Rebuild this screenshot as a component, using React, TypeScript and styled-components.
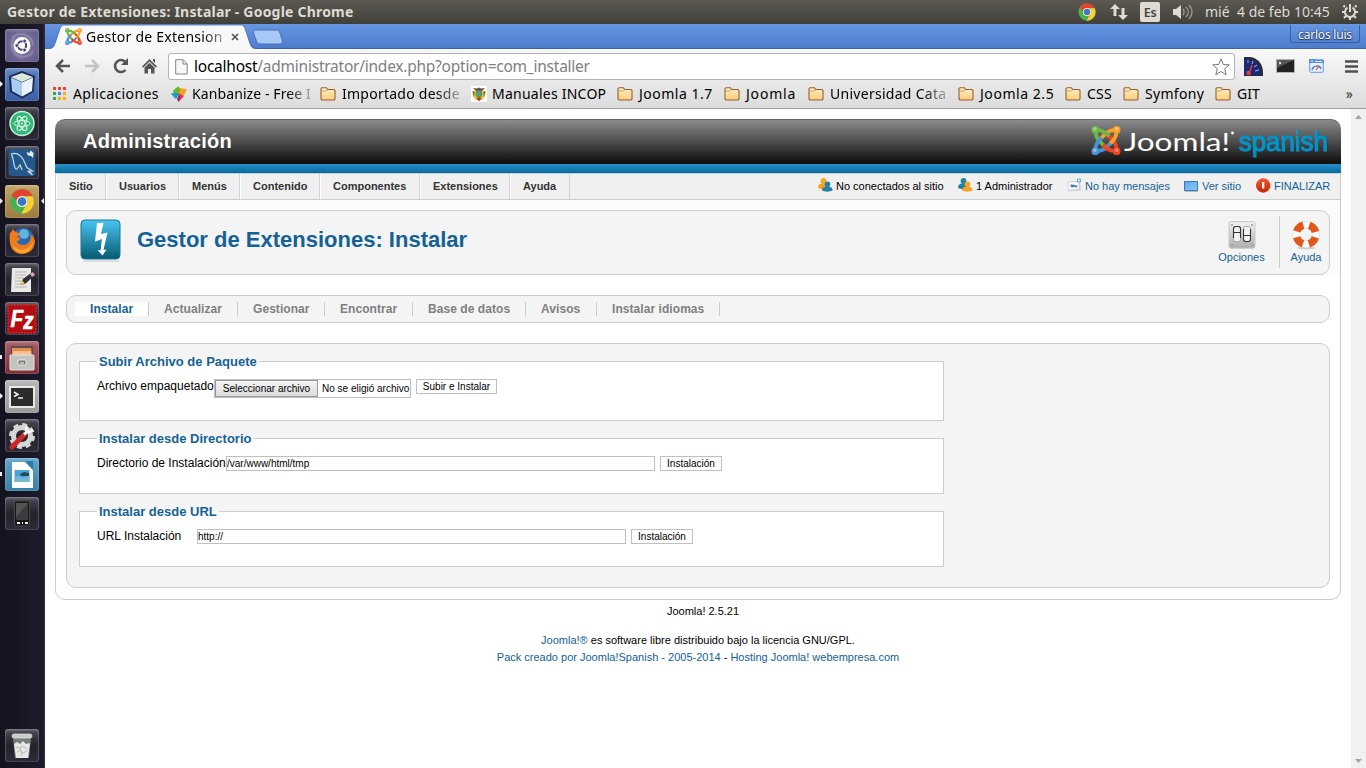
import React from 'react';
import styled, { createGlobalStyle } from 'styled-components';

const Global = createGlobalStyle`
  * { box-sizing: border-box; }
  html, body, #root { height: 100%; }
  body { margin: 0; overflow: hidden; background: #fff; color: #000; font-family: "Liberation Sans", Arial, sans-serif; font-size: 11px; }
  svg { display: block; flex: none; overflow: visible; }
`;

const Desktop = styled.div`
  width: 1366px; height: 768px; display: flex; flex-direction: column; overflow: hidden;
`;
const SystemBar = styled.header`
  height: 24px; flex: none; display: flex; align-items: center; justify-content: space-between;
  padding: 0 8px 0 7px; background: linear-gradient(#5b5952, #403f3a); color: #dfdbd2;
  font-family: "Noto Sans", sans-serif; font-size: 14px;
`;
const WindowTitle = styled.div`
  font-weight: 700; font-size: 14px; letter-spacing: 0.21px; line-height: 18px; padding-bottom: 1px; white-space: nowrap;
`;
const Tray = styled.div` display: flex; align-items: center; height: 24px; `;
const TrayItem = styled.div<{ $gap: number }>` margin-left: ${p => p.$gap}px; `;
const Lang = styled.div`
  width: 20px; height: 20px; border-radius: 2px; background: #dfdbd2; color: #45433e;
  font-size: 12.5px; letter-spacing: -0.3px; font-weight: 600; display: flex; align-items: center; justify-content: center;
`;
const Clock = styled.div` font-size: 14px; letter-spacing: 0.02px; line-height: 18px; padding-bottom: 1px; white-space: pre; width: 125px; `;
const Below = styled.div` flex: 1; display: flex; min-height: 0; `;
const Launcher = styled.nav`
  width: 45px; flex: none; padding: 5px 0 6px 5px; background: linear-gradient(90deg, #14121f, #1d1a2a 95%, #34313f);
  display: flex; flex-direction: column; gap: 6px;
`;
const Tile = styled.div<{ $bg: string; $last?: boolean }>`
  position: relative; width: 34px; height: 33px; flex: none; border-radius: 3px;
  background: ${p => p.$bg}; margin-top: ${p => (p.$last ? 'auto' : '0')};
  box-shadow: inset 0 0 0 1px rgba(255,255,255,.12), inset 0 2px 3px rgba(255,255,255,.2);
`;
const Mark = styled.i<{ $kind: 'arrow' | 'bar' | 'right' }>`
  position: absolute; top: ${p => (p.$kind === 'bar' ? 14 : 13)}px;
  ${p => (p.$kind === 'right' ? 'right: -5px' : 'left: -5px')};
  ${p => p.$kind === 'bar' ? 'width: 2px; height: 4px; background: #eee;'
    : p.$kind === 'arrow' ? 'border: 3px solid transparent; border-left-color: #eee; border-right: 0;'
      : 'border: 3px solid transparent; border-right-color: #eee; border-left: 0;'}
`;
const Browser = styled.div` flex: 1; min-width: 0; display: flex; flex-direction: column; `;
const TabStrip = styled.div`
  height: 25px; flex: none; display: flex; background: linear-gradient(#6796e2, #4c7bcd);
  justify-content: space-between; box-shadow: inset 0 -1px 0 #3c64ad;
  font-family: "Noto Sans", sans-serif;
`;
const Tab = styled.div`
  position: relative; width: 212px; height: 25px; display: flex; align-items: center; padding-left: 20px;
`;
const TabShape = styled.div` position: absolute; left: 0; top: 0; `;
const TabText = styled.div`
  position: relative; margin-left: 4px; width: 141px; white-space: nowrap; font-size: 14px; letter-spacing: 0.24px;
  mask-image: linear-gradient(90deg, #000 82%, rgba(0,0,0,.25));
`;
const TabIcon = styled.div<{ $gap?: number }>` position: relative; margin-left: ${p => p.$gap || 0}px; `;
const User = styled.div`
  width: 70px; height: 18px; margin: 1px 6px 0 0; border: 1px solid #36609f; border-top: 0; border-radius: 0 0 3px 3px;
  color: #fff; font-size: 12px; letter-spacing: -0.2px; line-height: 19px; text-align: center; text-shadow: 0 1px 1px #1c3566, 0 0 2px #1c3566, 0 0 1px #1c3566;
`;
const Chrome = styled.div`
  height: 60px; flex: none; background: linear-gradient(#f8f8f8, #dcdcdc); border-bottom: 1px solid #9d9d9d;
  font-family: "Noto Sans", sans-serif;
`;
const NavRow = styled.div` height: 34px; display: flex; align-items: center; padding-left: 10px; `;
const NavIcon = styled.div<{ $w: number }>` width: ${p => p.$w}px; `;
const Address = styled.div`
  width: 1067px; height: 27px; border: 1px solid #b3b3b3; border-radius: 3px; background: #fff; margin-top: 1px;
  display: flex; align-items: center; padding: 0 4px 0 6px; font-size: 15.5px; color: #808080; letter-spacing: -0.24px;
`;
const Url = styled.div` margin: -1px 0 0 6px; flex: 1; b { font-weight: 400; color: #000; } `;
const Extensions = styled.div` display: flex; align-items: center; margin-left: 9px; gap: 13px; `;
const MenuIcon = styled.div` margin-left: 20px; `;
const Bookmarks = styled.div` height: 21px; display: flex; align-items: center; padding-left: 7px; `;
const Bookmark = styled.div<{ $w: number }>` width: ${p => p.$w}px; height: 20px; display: flex; align-items: center; font-size: 14px; white-space: nowrap; `;
const BookmarkText = styled.span<{ $gap: number; $fade?: boolean; $ls?: number }>`
  margin-left: ${p => p.$gap}px; letter-spacing: ${p => p.$ls ?? 0}px;
  ${p => p.$fade ? 'mask-image: linear-gradient(90deg, #000 80%, rgba(0,0,0,.25));' : ''}
`;
const More = styled.div` margin-left: auto; padding-right: 13px; font-size: 14px; color: #333; `;

const Viewport = styled.div` flex: 1; display: flex; min-height: 0; background: #fff; `;
const Page = styled.main` flex: 1; padding: 10px 10px 0; `;
const Scroll = styled.div`
  width: 15px; background: #f1f1f1; display: flex; flex-direction: column; justify-content: space-between; align-items: center; padding: 6px 0 5px;
`;
const Head = styled.div`
  height: 45px; border-radius: 10px 10px 0 0; background: linear-gradient(#8b8b8b, #0c0c0c); border-top: 1px solid #666;
  display: flex; align-items: center; justify-content: space-between; padding: 0 12px 0 28px;
`;
const HeadTitle = styled.h1` margin: 0; font-size: 20px; letter-spacing: .24px; color: #fff; line-height: 24px; padding-bottom: 2px; `;
const Brand = styled.div` display: flex; align-items: center; height: 44px; padding-bottom: 2px; `;
const BlueBar = styled.div` height: 9px; background: linear-gradient(#2b90c9, #036ba0); `;
const Frame = styled.div` height: 427px; border: 1px solid #ccc; border-radius: 0 0 10px 10px; background: linear-gradient(#fbfbfb 101px, #fff 101px); `;
const MenuBar = styled.div`
  height: 26px; background: #f0f0f0; border-bottom: 1px solid #ccc; display: flex; justify-content: space-between; padding-right: 10px;
`;
const Menu = styled.div` display: flex; `;
const MenuItem = styled.div<{ $w: number }>`
  width: ${p => p.$w}px; padding-left: 12px; border-left: 1px solid #fff; border-right: 1px solid #d3d3d3;
  font-weight: 700; color: #333; line-height: 25px; white-space: nowrap;
`;
const Status = styled.div` display: flex; align-items: center; height: 24px; `;
const StatusItem = styled.div<{ $w: number; $link?: boolean }>`
  width: ${p => p.$w}px; height: 24px; display: flex; align-items: center; gap: 3px; white-space: nowrap; color: ${p => (p.$link ? '#146295' : '#000')};
  svg { margin-top: -2px; }
`;
const Body = styled.div` padding: 10px; `;
const Panel = styled.section<{ $h: number; $mb?: number }>`
  height: ${p => p.$h}px; margin-bottom: ${p => p.$mb ?? 0}px; background: #f4f4f4; border: 1px solid #ccc; border-radius: 10px;
`;
const TitlePanel = styled(Panel)` display: flex; align-items: flex-start; padding: 7px 0 0 12px; `;
const Title = styled.h2` margin: 9px 0 0 14px; font-size: 22px; line-height: 26px; color: #146295; flex: 1; `;
const Tool = styled.div<{ $w: number; $border?: boolean }>`
  width: ${p => p.$w}px; height: 52px; margin-top: -2px; padding: 5px 0 0 3px; display: flex; flex-direction: column; align-items: center; color: #146295;
  ${p => p.$border ? 'border-right: 1px solid #ccc; padding-left: 4px;' : ''}
`;
const ToolText = styled.span` line-height: 14px; margin-top: 1px; `;
const SubPanel = styled(Panel)` display: flex; align-items: center; padding-left: 8px; `;
const SubItem = styled.div<{ $w: number; $on?: boolean }>`
  width: ${p => p.$w}px; height: 14px; line-height: 14px; padding-left: 15px; border-right: 1px solid #ccc; font-size: 12px; font-weight: 700;
  letter-spacing: .06px; color: ${p => (p.$on ? '#146295' : '#808080')}; background: ${p => (p.$on ? '#fff' : 'transparent')}; white-space: nowrap;
`;
const FormPanel = styled(Panel)` padding: 9px 12px; `;
const Group = styled.fieldset<{ $h: number }>`
  width: 865px; height: ${p => p.$h}px; margin: 0 0 9px; padding: 0 17px; border: 1px solid #ccc; min-width: 0;
  background: #fff;
`;
const Legend = styled.legend` height: 17px; line-height: 17px; font-size: 13px; font-weight: 700; color: #146295; padding: 0 2px; `;
const Field = styled.div` display: flex; align-items: flex-start; padding-top: 9px; `;
const FieldLabel = styled.label<{ $w: number }>` width: ${p => p.$w}px; font-size: 12px; line-height: 15px; white-space: nowrap; `;
const TextInput = styled.input`
  width: 429px; height: 15px; padding: 0; border: 1px solid #c0c0c0; font: 10px "Liberation Sans", Arial, sans-serif; color: #000; outline: 0; border-radius: 0;
`;
const Button = styled.button<{ $w: number }>`
  width: ${p => p.$w}px; height: 15px; margin-left: 5px; padding: 0; background: #fff; border: 1px solid #c0c0c0; color: #000;
  font: 10px/12px "Liberation Sans", Arial, sans-serif; border-radius: 0; white-space: nowrap;
`;
const FileBox = styled.div`
  width: 197px; height: 19px; border: 1px solid #c0c0c0; background: #fff; display: flex; font-size: 10px; line-height: 17px; white-space: nowrap;
`;
const FileButton = styled.span`
  width: 103px; height: 17px; border: 1px solid #999; background: linear-gradient(#f4f4f4, #dcdcdc); text-align: center; margin-right: 4px; line-height: 16px;
`;
const Footer = styled.footer` text-align: center; line-height: 17px; padding-top: 3px; `;
const FooterLine = styled.div<{ $mt?: number }>` margin-top: ${p => p.$mt || 0}px; `;
const Version = styled(FooterLine)` padding-left: 10px; `;
const Blue = styled.span` color: #146295; `;

const JoomlaMark = ({ size }: { size: number }) => (
  <svg width={size} height={size} viewBox="0 0 30 30" fill="none" strokeWidth="4" strokeLinejoin="round">
    <path d="M26 26C26 20 24.800 17.500 22 14.500L15.500 8" stroke="#f44321" />
    <path d="M4 26C10 26 12.500 24.800 15.500 22L22 15.500" stroke="#4795d6" />
    <path d="M4 4C4 10 5.200 12.500 8 15.500L14.500 22" stroke="#6fb744" />
    <path d="M26 4C20 4 17.500 5.200 14.500 8L8 14.500" stroke="#f9a028" />
    <path d="M4 26C4 20 5.200 17.500 8 14.500L10.500 12" stroke="#4795d6" />
    <path d="M4 4C10 4 12.500 5.200 15.500 8l2.500 2.500" stroke="#6fb744" />
    <path d="M26 4C26 10 24.800 12.500 22 15.500L19.500 18" stroke="#f9a028" />
    <path d="M26 26C20 26 17.500 24.800 14.500 22L12 19.500" stroke="#f44321" />
    <g stroke="none"><circle cx="4" cy="4" r="4" fill="#6fb744" /><circle cx="26" cy="4" r="4" fill="#f9a028" /><circle cx="26" cy="26" r="4" fill="#f44321" /><circle cx="4" cy="26" r="4" fill="#4795d6" />
      <g fill="#fff" opacity=".35"><circle cx="3.500" cy="3" r="1.900" /><circle cx="26" cy="3" r="1.900" /><circle cx="26" cy="25" r="1.900" /><circle cx="3.500" cy="25" r="1.900" /></g></g>
  </svg>
);
const ChromeMark = ({ size }: { size: number }) => (
  <svg width={size} height={size} viewBox="0 0 24 24">
    <circle cx="12" cy="12" r="11.5" fill="#4caf50" />
    <path d="M2 6.3A11.5 11.5 0 0 1 22.5 7H12a5 5 0 0 0-4.9 4.2z" fill="#e1432f" />
    <path d="M22.3 7A11.5 11.5 0 0 1 11.5 23.5l5-9A5 5 0 0 0 14.5 7z" fill="#fbcf2f" />
    <circle cx="12" cy="12" r="5.3" fill="#f4f4f0" /><circle cx="12" cy="12" r="4.2" fill="#3978c5" />
  </svg>
);
const Folder = () => (
  <svg width="16" height="14" viewBox="0 0 16 14">
    <defs><linearGradient id="fold" x2="0" y2="1"><stop stopColor="#fff0c4" /><stop offset="1" stopColor="#ffcb7c" /></linearGradient></defs>
    <path d="M1 3V1.6L2 .7h4.5l1 1.8H14l1 .9V12l-1 1H2l-1-1z" fill="url(#fold)" stroke="#8f6335" strokeWidth="1.1" />
    <path d="M1.6 4h4.6l1.2-1.3" stroke="#b98a50" strokeWidth=".7" fill="none" />
  </svg>
);
const Apps = () => {
  const c = ['#e8453c', '#e8453c', '#e8453c', '#34a853', '#4285f4', '#fbb000', '#34a853', '#fbb000', '#fbb000'];
  return <svg width="14" height="13">{c.map((f, i) => <rect key={i} x={1 + (i % 3) * 5} y={Math.floor(i / 3) * 5} width="3" height="3" fill={f} />)}</svg>;
};
const Kanban = () => (
  <svg width="16" height="16" viewBox="0 0 16 16">
    <path d="M2 4.500L7 .500l3 2L8.500 8 3 9z" fill="#6db52c" /><path d="M9 2l7 1.500-3.500 6.500-5-2z" fill="#f3a31e" />
    <path d="M0 7.500L7 7l1 1-3 5z" fill="#0b8fd0" /><path d="M0 7.500l4 5 4-4.500z" fill="#1e9fd0" /><path d="M8 7.500l5 2.500-5.500 6z" fill="#e0344a" /><path d="M8 8l-2 5 1.500 3 2-4z" fill="#a3246e" />
  </svg>
);
const Crest = () => (
  <svg width="16" height="16" viewBox="0 0 16 16">
    <path fill="#fff" d="M0 0h16v16H0z" /><path d="M1.500 5l4 0 2.500-2 2.500 2 4 0-.5 5-3 4H5l-3-4z" fill="#e2c52d" />
    <path d="M2 2l4 .5L8 1.500l2 1 4-.5-3 3H5zM1.500 5l2 1-.5 5zM14.500 5l-2 1 .5 5z" fill="#5f5540" /><ellipse cx="8" cy="8" rx="2.800" ry="3.500" fill="#38a9a5" stroke="#8e6b38" /><path d="M5.500 12h5L8 15.500z" fill="#a63d30" />
  </svg>
);
const People = ({ a, b }: { a: string; b: string }) => (
  <svg width="15" height="14" viewBox="0 0 15 14">
    <circle cx="5.500" cy="3" r="2.900" fill={a} /><path d="M0 10c0-3 1-3.800 3.500-4.500h4l3 5c-3 1-7 1-10.500-.5z" fill={a} />
    <circle cx="9.500" cy="6.300" r="2.800" fill={b} /><path d="M4 12.500c0-2.500 1-3 3.500-3.700h4c2.500.7 3 1.500 3 3.700-3 1.500-7.500 1.500-10.500 0z" fill={b} />
  </svg>
);
const MailIcon = () => (
  <svg width="15" height="14" viewBox="0 0 15 14"><path d="M1 4L13 2.500l1 10-12.500 1z" fill="#cfd3d6" /><path d="M1 3.500h11v8L1 12.500z" fill="#f4f5f6" stroke="#c3c9cd" strokeWidth=".7" /><path d="M3.500 7.500c2-2 5 2.500 6.500 0M4 8.500c2 1 3-2 6 .5" stroke="#2b7ca3" strokeWidth="1.200" fill="none" /><path d="M10.500 1h3v3h-3z" fill="#cfe6f3" stroke="#5f9dc0" strokeWidth=".8" /></svg>
);
const ScreenIcon = () => (
  <svg width="15" height="12" viewBox="0 0 15 12"><defs><linearGradient id="scr" x2="1" y2="1"><stop stopColor="#5aa8ec" /><stop offset="1" stopColor="#8cc8ff" /></linearGradient></defs><rect x=".5" y="2.500" width="13" height="9" fill="url(#scr)" stroke="#3f78b5" /><path d="M1 12.500h13" stroke="#bbb" /></svg>
);
const StopIcon = () => (
  <svg width="15" height="15" viewBox="0 0 15 15"><defs><linearGradient id="stp" x2="0" y2="1"><stop stopColor="#f2592b" /><stop offset="1" stopColor="#c42608" /></linearGradient></defs><circle cx="7.200" cy="7.500" r="7.200" fill="url(#stp)" /><path d="M7.200 4v6.500" stroke="#fff" strokeWidth="2.200" /></svg>
);
const OptionsIcon = () => (
  <svg width="28" height="28" viewBox="0 0 28 28"><defs><linearGradient id="opt" x2="0" y2="1"><stop stopColor="#f3f3f3" /><stop offset="1" stopColor="#adadad" /></linearGradient></defs>
    <rect x="1" y=".700" width="26" height="26.500" rx="2" fill="url(#opt)" stroke="#c6c6c6" />
    <g fill="#999"><circle cx="4" cy="4" r="1" /><circle cx="24" cy="4" r="1" /><circle cx="4" cy="24" r="1" /><circle cx="24" cy="24" r="1" /></g>
    <rect x="5.500" y="5.500" width="7" height="15" rx="2" fill="#f2f2f2" stroke="#999" strokeWidth=".8" /><rect x="15.500" y="5.500" width="7" height="15" rx="2" fill="#f2f2f2" stroke="#999" strokeWidth=".8" />
    <path d="M5.500 17V8q0-2.500 2-2.500h3q2 0 2 2.500v9M6 11.500h6.500M15.500 8v10q0 2.500 2 2.500h3q2 0 2-2.500V8M16 14.500h6" fill="none" stroke="#333" strokeWidth="1.100" /></svg>
);
const HelpIcon = () => (
  <svg width="28" height="28" viewBox="0 0 28 28"><ellipse cx="14" cy="27" rx="9" ry="1.500" fill="#ccc" /><circle cx="14" cy="13.500" r="9.700" fill="none" stroke="#d2cfcb" strokeWidth="7.600" /><circle cx="14" cy="13.500" r="9.700" fill="none" stroke="#fbfbfa" strokeWidth="6.600" />
    <circle cx="14" cy="13.500" r="9.800" fill="none" stroke="#e0581c" strokeWidth="7.400" strokeDasharray="9.400 5.994" transform="rotate(17.500 14 13.500)" /></svg>
);
const Glyph = ({ children }: { children: React.ReactNode }) => <svg width="34" height="33" viewBox="0 0 34 33">{children}</svg>;

const dark = 'linear-gradient(#4a4852, #24222e 50%, #2d2b38)';
type Entry = { bg: string; marks?: ('arrow' | 'bar' | 'right')[]; art: React.ReactNode; last?: boolean };
const entries: Entry[] = [
  { bg: 'radial-gradient(circle, #8a7fa8, #5e5587)', art: <>
    <path d="M7 10C12 1 27 5 28 16M28 22C24 31 9 29 7 18M12 5C3 12 6 26 17 29" stroke="#aaa0bd" strokeWidth="2" fill="none" opacity=".5" />
    <circle cx="17" cy="16.500" r="8.500" fill="#fff" /><circle cx="17" cy="16.500" r="4.200" fill="none" stroke="#4b416b" strokeWidth="2" />
    <g fill="#4b416b" stroke="#fff" strokeWidth=".8"><circle cx="11.800" cy="16.500" r="1.900" /><circle cx="19.600" cy="12" r="1.900" /><circle cx="19.600" cy="21" r="1.900" /></g></> },
  { bg: 'linear-gradient(#5f84c0, #385fa6)', marks: ['arrow'], art: <>
    <path d="M17 3l13 5-1.500 16L17 30.500 5 24 4 8z" fill="#1c2c50" /><path d="M17 5l11 4-11 5L6 9z" fill="#dceade" /><path d="M6 9.500l11 5v14L7 23z" fill="#a9cdf2" /><path d="M28 9.500l-11 5v14L27 23z" fill="#e9f3fd" /></> },
  { bg: dark, art: <>
    <circle cx="17" cy="16.500" r="12" fill="#34b87a" stroke="#c9eed9" strokeWidth="1.500" />
    <g fill="none" stroke="#d9f6e5" strokeWidth="1"><ellipse cx="17" cy="16.500" rx="8" ry="3" /><ellipse cx="17" cy="16.500" rx="8" ry="3" transform="rotate(60 17 16.500)" /><ellipse cx="17" cy="16.500" rx="8" ry="3" transform="rotate(120 17 16.500)" /></g><circle cx="17" cy="16.500" r="1" fill="#d9f6e5" /></> },
  { bg: dark, art: <>
    <rect x="3.500" y="3" width="27" height="27" rx="3" fill="#22598a" /><path d="M12 23c-2 1-3-4-4-10L6.500 8c5-2 9 1 12 6 2 4 2 6 4 8l5 3-3 0 3 4-5-4M12 23l3-4 2 5" fill="none" stroke="#c9dae7" strokeWidth="1.200" /><path d="M21.500 6l3 1 1-2.500 3 2.500-.5 5-2-2-3-.5z" fill="#e5edf3" /></> },
  { bg: 'linear-gradient(#c3a267, #9d7b3c)', marks: ['arrow', 'right'], art: <g transform="translate(4.500 4)"><ChromeMark size={25} /></g> },
  { bg: dark, art: <>
    <circle cx="18" cy="15" r="11" fill="#2a67ad" /><circle cx="19" cy="10" r="5" fill="#63b2df" /><path d="M5 9c1 0 2-3 3-4 1 3 4 3 7 5-1 2-3 2-3 3 2 0 3 1 3 3-1 1-3 0-3 2 2 4 10 4 12 0 2-3 2-5 1-8 3 3 3 4 3 1l2 6c0 8-6 13-13 13C8 30 3 22 5 9z" fill="#ee7a1e" /><path d="M7 19c2 7 15 11 21-1-1 8-6 11-11 11-6 0-9-5-10-10z" fill="#fba92c" /></> },
  { bg: dark, art: <>
    <path d="M7 5h19v24H6z" fill="#e8e8e4" /><path d="M10 9h12M10 12h11M10 15h9M10 18h7M10 21h8M10 24h12" stroke="#b5b5b5" /><path d="M15 22l3-6 8-6 3 3-9 8z" fill="#2f2d3c" /><path d="M15 22l2-5 3 4z" fill="#e5c95a" /><path d="M25 11l3-2 2 3-3 2z" fill="#dca6bd" /></> },
  { bg: dark, art: <>
    <rect x="3" y="3" width="28" height="28" fill="#b40d11" stroke="#d22a2e" strokeWidth="1.500" strokeDasharray="2 1" /><text x="5.500" y="25" textLength="23" lengthAdjust="spacingAndGlyphs" fontFamily="Liberation Sans" fontWeight="700" fontStyle="italic" fontSize="24" fill="#fff" stroke="#fff" strokeWidth=".6">F<tspan dy="2">z</tspan></text></> },
  { bg: 'linear-gradient(#a86068, #7d2d38)', marks: ['bar'], art: <>
    <path d="M6 5h22v10H6z" fill="#57504c" /><path d="M7 7h19l1 7H7z" fill="#e98b4b" /><path d="M8 10h18v4H8z" fill="#f6bf90" /><rect x="5" y="14" width="24" height="15" rx="1" fill="#c2c2be" stroke="#e5e5e2" /><rect x="13" y="19" width="8" height="5" rx="1" fill="#777" stroke="#eee" /><path d="M15 22h4" stroke="#fff" /></> },
  { bg: 'linear-gradient(#b5b5b5, #9a9a9a)', marks: ['arrow'], art: <>
    <rect x="4" y="6" width="26" height="22" rx="1" fill="#e8e8e6" /><rect x="6" y="8" width="22" height="18" fill="#2a2b2a" /><path d="M9 12l4 2.500-4 2M13 18h5" fill="none" stroke="#f0f0f0" strokeWidth="1.500" /></> },
  { bg: dark, art: <>
    <circle cx="17" cy="17" r="8.500" fill="none" stroke="#d5d5d3" strokeWidth="5" /><circle cx="17" cy="17" r="11.500" fill="none" stroke="#d5d5d3" strokeWidth="3" strokeDasharray="5 4" /><path d="M7 28L19 16" stroke="#c92a29" strokeWidth="5" strokeLinecap="round" /><path d="M19 15.500l4-3.500" stroke="#f4f4f2" strokeWidth="3" /><path d="M22 7c-2 4 1 8 6 4" stroke="#f4f4f2" strokeWidth="2.800" fill="none" /></> },
  { bg: 'linear-gradient(#60a5c9, #3880a7)', marks: ['bar'], art: <>
    <path d="M7 4h13l8 8v18H7z" fill="#fff" /><path d="M20 3h8v9z" fill="#2b7caf" /><rect x="9.500" y="12" width="15" height="12" fill="#4aa4db" /><path d="M9.500 20l4-2 4 2 7-2v6h-15z" fill="#78b7d1" /><path d="M15 16l4-2 5 1v3h-8z" fill="#244b58" /></> },
  { bg: dark, art: <>
    <rect x="9.500" y="4" width="15" height="25" rx="2" fill="#161616" stroke="#474747" /><path d="M11 6h12v17H11z" fill="#3c3c3c" /><path d="M11 6h12L11 20z" fill="#545454" /><path d="M12 26h3M17 26h1M20 26h3" stroke="#f0f0f0" strokeWidth="1.800" /></> },
  { bg: dark, last: true, art: <>
    <path d="M8 9h18l-2 20H10z" fill="#777b79" /><rect x="7" y="5" width="20" height="4" rx="2" fill="#c7cac7" stroke="#eee" strokeWidth=".7" /><path d="M9 15l3-2 3 2 3-3 3 3 4-1-2 15H11z" fill="#e7e9e6" /><path d="M11 18l4 1 3-2 4 3M12 23l3-2 3 3 4-2M15 19l2 8" stroke="#b5bab4" fill="none" /></> },
];

const bookmarks: { w: number; text: string; icon: React.ReactNode; gap: number; fade?: boolean; ls?: number }[] = [
  { w: 119, text: 'Aplicaciones', icon: <Apps />, gap: 7, ls: 0.36 },
  { w: 149, text: 'Kanbanize - Free I', icon: <Kanban />, gap: 5, fade: true, ls: 0.1 },
  { w: 151, text: 'Importado desde', icon: <Folder />, gap: 6, fade: true, ls: 0.25 },
  { w: 146, text: 'Manuales INCOP', icon: <Crest />, gap: 5, ls: 0.24 },
  { w: 107, text: 'Joomla 1.7', icon: <Folder />, gap: 6, ls: 0.5 },
  { w: 84, text: 'Joomla', icon: <Folder />, gap: 6, ls: 0.8 },
  { w: 150, text: 'Universidad Cata', icon: <Folder />, gap: 6, fade: true, ls: 0.28 },
  { w: 107, text: 'Joomla 2.5', icon: <Folder />, gap: 6, ls: 0.55 },
  { w: 58, text: 'CSS', icon: <Folder />, gap: 6, ls: 0.2 },
  { w: 92, text: 'Symfony', icon: <Folder />, gap: 6, ls: 0.3 },
  { w: 60, text: 'GIT', icon: <Folder />, gap: 6 },
];
const menu: [string, number][] = [['Sitio', 50], ['Usuarios', 73], ['Menús', 61], ['Contenido', 80], ['Componentes', 100], ['Extensiones', 90], ['Ayuda', 60]];
const sub: [string, number][] = [['Instalar', 74], ['Actualizar', 89], ['Gestionar', 87], ['Encontrar', 88], ['Base de datos', 113], ['Avisos', 71], ['Instalar idiomas', 123]];

export default function App() {
  return (
    <Desktop>
      <Global />
      <SystemBar>
        <WindowTitle>Gestor de Extensiones: Instalar - Google Chrome</WindowTitle>
        <Tray>
          <ChromeMark size={18} />
          <TrayItem $gap={14}><svg width="18" height="16" viewBox="0 0 18 16" fill="#dfdbd2"><path d="M5 0l5 5H6.500v7h-3V5H0zM13 16l-5-5h3.500V4h3v7H18z" /></svg></TrayItem>
          <TrayItem $gap={12}><Lang>Es</Lang></TrayItem>
          <TrayItem $gap={13}><svg width="20" height="16" viewBox="0 0 20 16"><path d="M0 5h3l5-4v14l-5-4H0z" fill="#dfdbd2" /><g fill="none" stroke="#99968e" strokeWidth="1.400"><path d="M10 5c1.500 2 1.500 4 0 6M13 3c3 3 3 7 0 10M16 1c4 4 4 10 0 14" /></g></svg></TrayItem>
          <TrayItem $gap={12}><Clock>mié  4 de feb 10:45</Clock></TrayItem>
          <TrayItem $gap={12}><svg width="16" height="16" viewBox="0 0 16 16" fill="none" stroke="#dfdbd2"><path d="M5.500 3.700a5 5 0 1 0 5 0" strokeWidth="2" /><path d="M8 0v8" strokeWidth="2" /><path d="M3 3L1.500 1.500M13 3l1.500-1.500M2.500 8H0M13.500 8H16M4 12l-2 2M12 12l2 2M8 13v3" strokeWidth="2.200" /></svg></TrayItem>
        </Tray>
      </SystemBar>
      <Below>
        <Launcher>
          {entries.map((e, i) => <Tile key={i} $bg={e.bg} $last={e.last}><Glyph>{e.art}</Glyph>{e.marks?.map(m => <Mark key={m} $kind={m} />)}</Tile>)}
        </Launcher>
        <Browser>
          <TabStrip>
            <Tab>
              <TabShape><svg width="245" height="25" viewBox="0 0 245 25"><path d="M0 24.500h4c4 0 5-2 6-5L14.500 6C15.500 3 16 1 20 1h175c4 0 4.500 2 5.500 5L205 19.500c1 3 2 5 6 5V26H0z" fill="#f8f8f8" /><path d="M0 24.500h4c4 0 5-2 6-5L14.500 6C15.500 3 16 1 20 1h175c4 0 4.500 2 5.500 5L205 19.500c1 3 2 5 6 5" fill="none" stroke="#3c64ad" strokeWidth=".8" /><path d="M210 6h21c3 0 3 1 4 3l2.500 8c0 2-1 3-3 3h-18c-4 0-4-1-5-3l-3-8c0-2 0-3 1.500-3z" fill="#a6c8f6" stroke="#4870b9" /></svg></TabShape>
              <TabIcon><JoomlaMark size={17} /></TabIcon>
              <TabText>Gestor de Extension</TabText>
              <TabIcon $gap={4}><svg width="8" height="8" viewBox="0 0 8 8"><path d="M1 1l6 6M7 1L1 7" stroke="#555" strokeWidth="1.700" /></svg></TabIcon>
            </Tab>
            <User>carlos luis</User>
          </TabStrip>
          <Chrome>
            <NavRow>
              <NavIcon $w={29}><svg width="16" height="14" viewBox="0 0 16 14" fill="none" stroke="#555" strokeWidth="2.500"><path d="M15 7H2M8 1L2 7l6 6" /></svg></NavIcon>
              <NavIcon $w={29}><svg width="16" height="14" viewBox="0 0 16 14" fill="none" stroke="#c3c3c3" strokeWidth="2.500"><path d="M1 7h13M8 1l6 6-6 6" /></svg></NavIcon>
              <NavIcon $w={29}><svg width="16" height="16" viewBox="0 0 16 16"><path d="M12.500 12A6 6 0 1 1 12 3.500" fill="none" stroke="#555" strokeWidth="2.600" /><path d="M15 0v7H8z" fill="#555" /></svg></NavIcon>
              <NavIcon $w={26}><svg width="16" height="16" viewBox="0 0 16 16" fill="#555"><path d="M7.500 1l7.500 7.500-1.200 1.200L7.500 3.500 1.200 9.700 0 8.500zM11 1h2v4l-2-2z" /><path d="M2.500 9.500L7.500 4.700l5 4.800V15.500h-3.500V11h-3v4.500H2.500z" /></svg></NavIcon>
              <Address>
                <svg width="13" height="16" viewBox="0 0 13 16"><path d="M.7.700h7.500l4 4V15H.7z" fill="#f8f8f8" stroke="#858585" /><path d="M8 1v4h4" fill="none" stroke="#858585" /></svg>
                <Url><b>localhost</b>/administrator/index.php?option=com_installer</Url>
                <svg width="18" height="18" viewBox="0 0 18 18"><path d="M9 .8l2.300 5.700 6 .3-4.600 4 1.500 6L9 13.500 3.800 16.800l1.500-6-4.600-4 6-.3z" fill="#fff" stroke="#777" /></svg>
              </Address>
              <Extensions>
                <svg width="19" height="19" viewBox="0 0 19 19"><path d="M0 0h6c8 1 13 7 13 16v3H0z" fill="#292b34" /><path d="M0 2h5c7 1 11 6 12 14v2H0z" fill="#1b2a74" /><path d="M5 17L8 8" stroke="#e53838" strokeWidth="1.500" /><circle cx="4.500" cy="16" r="2.300" fill="#e53838" /><path d="M4 3v3M9 4l-1 3M13 8l-3 2M15 13l-4 1" stroke="#a9b2de" /></svg>
                <svg width="19" height="14" viewBox="0 0 19 14"><path d="M.5.500h18v13H.5z" fill="#222" stroke="#b1b1b1" /><path d="M1 1h17L1 9z" fill="#555" /><path d="M3 3l2 1-2 1" stroke="#fff" fill="none" /></svg>
                <svg width="17" height="14" viewBox="-1 0 17 14"><rect x=".7" y=".7" width="13.600" height="12.600" rx="1" fill="#e8f1ff" stroke="#619be8" /><path d="M0 0h6l1 1h8v3H0z" fill="#5792e7" /><path d="M2 2h2M6 2.500h7" stroke="#dbe9ff" /><path d="M3 11c1-5 8-5 9-1" stroke="#547fb8" fill="none" strokeWidth="1.500" /><path d="M7 11l3-4" stroke="#d84d4d" strokeWidth="1.200" /></svg>
              </Extensions>
              <MenuIcon><svg width="13" height="13" viewBox="0 0 13 13"><path d="M0 1.500h13M0 6.500h13M0 11.500h13" stroke="#505050" strokeWidth="2.600" /></svg></MenuIcon>
            </NavRow>
            <Bookmarks>
              {bookmarks.map((b, i) => <Bookmark key={i} $w={b.w}>{b.icon}<BookmarkText $gap={b.gap} $fade={b.fade} $ls={b.ls}>{b.text}</BookmarkText></Bookmark>)}
              <More>»</More>
            </Bookmarks>
          </Chrome>
          <Viewport>
            <Page>
              <Head>
                <HeadTitle>Administración</HeadTitle>
                <Brand>
                  <svg width="238" height="34" viewBox="0 0 238 34">
                    <g transform="translate(.5 2)"><JoomlaMark size={29} /></g>
                    <text x="33" y="26.500" textLength="106" lengthAdjust="spacingAndGlyphs" fontFamily="Lato, sans-serif" fontSize="25" fill="#fff">Joomla!</text>
                    <circle cx="141.500" cy="9" r="1.400" fill="#fff" />
                    <text x="148" y="26.500" textLength="89" lengthAdjust="spacingAndGlyphs" fontFamily="Liberation Sans, sans-serif" fontSize="28" fill="#0093c9" stroke="#0093c9" strokeWidth="1">spanish</text>
                  </svg>
                </Brand>
              </Head>
              <BlueBar />
              <Frame>
                <MenuBar>
                  <Menu>{menu.map(([t, w]) => <MenuItem key={t} $w={w}>{t}</MenuItem>)}</Menu>
                  <Status>
                    <StatusItem $w={140}><People a="#f7a521" b="#2380a6" />No conectados al sitio</StatusItem>
                    <StatusItem $w={109}><People a="#2380a6" b="#f7a521" />1 Administrador</StatusItem>
                    <StatusItem $w={117} $link><MailIcon />No hay mensajes</StatusItem>
                    <StatusItem $w={72} $link><ScreenIcon />Ver sitio</StatusItem>
                    <StatusItem $w={74} $link><StopIcon />FINALIZAR</StatusItem>
                  </Status>
                </MenuBar>
                <Body>
                  <TitlePanel $h={65} $mb={20}>
                    <svg width="44" height="44" viewBox="0 0 44 44"><defs><linearGradient id="bolt" x2="0" y2="1"><stop stopColor="#49c5f3" /><stop offset="1" stopColor="#075970" /></linearGradient></defs><path d="M4 43h36" stroke="#ddd" strokeWidth="2" /><rect x="2" y="2" width="39" height="39" rx="4" fill="url(#bolt)" stroke="#157899" /><path d="M18 5h6.500l-2.500 11 6.500-1.500L24.500 32l3-.5-4 6-5-5.500 3 .5 1.500-11.500-7 2.500z" fill="#fff" /></svg>
                    <Title>Gestor de Extensiones: Instalar</Title>
                    <Tool $w={80} $border><OptionsIcon /><ToolText>Opciones</ToolText></Tool>
                    <Tool $w={49}><HelpIcon /><ToolText>Ayuda</ToolText></Tool>
                  </TitlePanel>
                  <SubPanel $h={28} $mb={20}>
                    {sub.map(([t, w], i) => <SubItem key={t} $w={w} $on={i === 0}>{t}</SubItem>)}
                  </SubPanel>
                  <FormPanel $h={245}>
                    <Group $h={68}>
                      <Legend>Subir Archivo de Paquete</Legend>
                      <Field>
                        <FieldLabel $w={117}>Archivo empaquetado</FieldLabel>
                        <FileBox><FileButton>Seleccionar archivo</FileButton>No se eligió archivo</FileBox>
                        <Button $w={81}>Subir e Instalar</Button>
                      </Field>
                    </Group>
                    <Group $h={64}>
                      <Legend>Instalar desde Directorio</Legend>
                      <Field>
                        <FieldLabel $w={129}>Directorio de Instalación</FieldLabel>
                        <TextInput defaultValue="/var/www/html/tmp" />
                        <Button $w={62}>Instalación</Button>
                      </Field>
                    </Group>
                    <Group $h={64}>
                      <Legend>Instalar desde URL</Legend>
                      <Field>
                        <FieldLabel $w={100}>URL Instalación</FieldLabel>
                        <TextInput defaultValue="http://" />
                        <Button $w={62}>Instalación</Button>
                      </Field>
                    </Group>
                  </FormPanel>
                </Body>
              </Frame>
              <Footer>
                <Version>Joomla! 2.5.21</Version>
                <FooterLine $mt={12}><Blue>Joomla!®</Blue> es software libre distribuido bajo la licencia GNU/GPL.</FooterLine>
                <FooterLine><Blue>Pack creado por Joomla!Spanish - 2005-2014</Blue> - <Blue>Hosting Joomla! webempresa.com</Blue></FooterLine>
              </Footer>
            </Page>
            <Scroll>
              <svg width="7" height="4" viewBox="0 0 7 4"><path d="M0 4L3.500 0 7 4z" fill="#a3a3a3" /></svg>
              <svg width="7" height="4" viewBox="0 0 7 4"><path d="M0 0h7L3.500 4z" fill="#a3a3a3" /></svg>
            </Scroll>
          </Viewport>
        </Browser>
      </Below>
    </Desktop>
  );
}
